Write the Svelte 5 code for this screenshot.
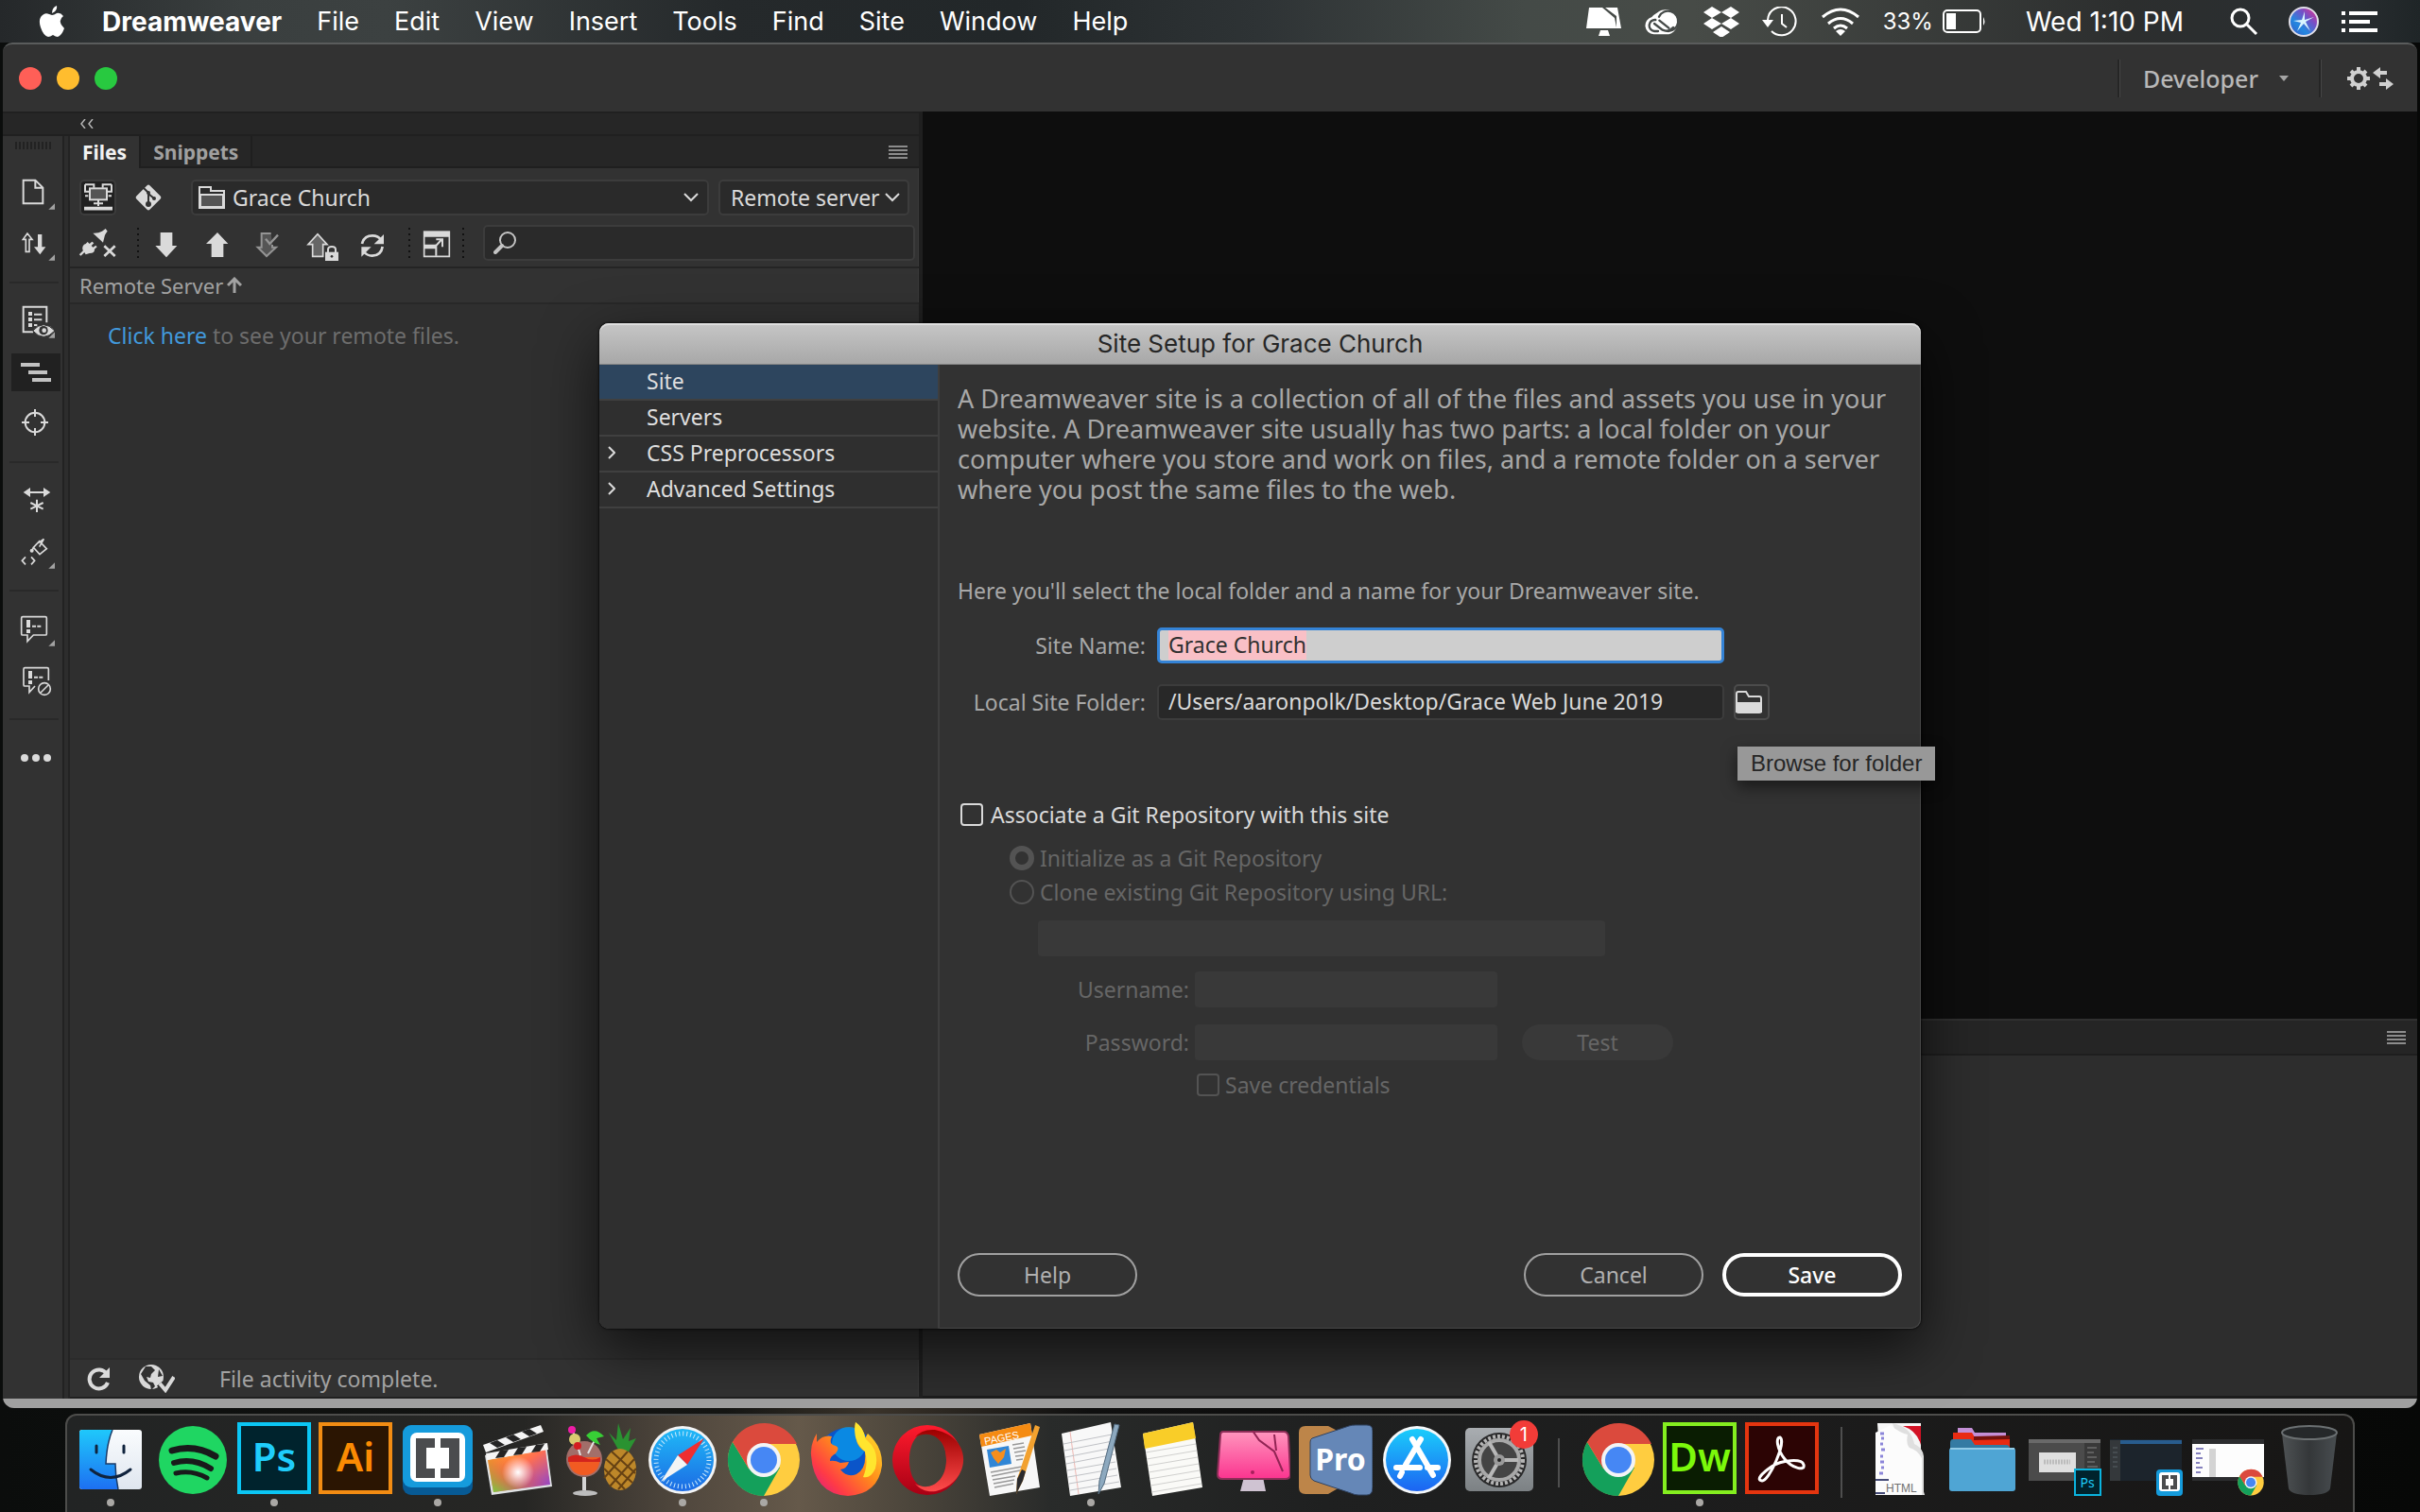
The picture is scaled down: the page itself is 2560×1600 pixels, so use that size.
<script lang="ts">
    import { onMount } from "svelte";

    const menus = ["File", "Edit", "View", "Insert", "Tools", "Find", "Site", "Window", "Help"];

    const categories = [
        { name: "Site", nested: false },
        { name: "Servers", nested: false },
        { name: "CSS Preprocessors", nested: true },
        { name: "Advanced Settings", nested: true },
    ];

    const dockLeft = [
        { name: "Finder", icon: finder, open: true },
        { name: "Spotify", icon: spotify, open: false },
        { name: "Photoshop", icon: photoshop, open: true },
        { name: "Illustrator", icon: illustrator, open: false },
        { name: "Brackets", icon: brackets, open: true },
        { name: "Final Cut Pro", icon: finalcut, open: false },
        { name: "Cocktail", icon: cocktail, open: false },
        { name: "Safari", icon: safari, open: true },
        { name: "Chrome", icon: chrome, open: true },
        { name: "Firefox", icon: firefox, open: false },
        { name: "Opera", icon: opera, open: false },
        { name: "Pages", icon: pages, open: false },
        { name: "TextEdit", icon: textedit, open: true },
        { name: "Notes", icon: notes, open: false },
        { name: "CleanMyMac", icon: cleaner, open: false },
        { name: "ProPresenter", icon: pro, open: false },
        { name: "App Store", icon: appstore, open: false },
        { name: "System Preferences", icon: settings, open: false },
    ];
    const dockMiddle = [
        { name: "Chrome", icon: chrome, open: false },
        { name: "Dreamweaver", icon: dreamweaver, open: true },
        { name: "Acrobat", icon: acrobat, open: false },
    ];
    const dockRight = [
        { name: "Documents", icon: htmlStack, open: false },
        { name: "Folder", icon: folderStack, open: false },
        { name: "Photoshop window", icon: thumbPs, open: false },
        { name: "Brackets window", icon: thumbBrackets, open: false },
        { name: "Chrome window", icon: thumbChrome, open: false },
        { name: "Trash", icon: trash, open: false },
    ];

    let selected = $state("Site");
    let siteName = $state("Grace Church");
    let folder = $state("/Users/aaronpolk/Desktop/Grace Web June 2019");
    let useGit = $state(false);
    let nameInput: HTMLInputElement;

    onMount(() => {
        nameInput.focus();
        nameInput.select();
    });
</script>

{#snippet chevron()}
    <svg class="chevron" viewBox="0 0 16 10"><path d="M1 1 8 8l7-7" fill="none" stroke="currentColor" stroke-width="2" /></svg>
{/snippet}

{#snippet hamburger()}
    <svg class="hamburger" viewBox="0 0 20 14"><path d="M0 1h20M0 5h20M0 9h20M0 13h20" stroke="#8c8c8c" stroke-width="2" /></svg>
{/snippet}

{#snippet finder()}
    <defs>
        <linearGradient id="fi-a" x1="0" y1="0" x2="0" y2="1"><stop offset="0" stop-color="#1fc8fb" /><stop offset="1" stop-color="#1d70f2" /></linearGradient>
        <linearGradient id="fi-b" x1="0" y1="0" x2="0" y2="1"><stop offset="0" stop-color="#fafcfe" /><stop offset="1" stop-color="#dfe6ef" /></linearGradient>
    </defs>
    <rect x="6" y="9" width="66" height="63" rx="3" fill="url(#fi-b)" />
    <path d="M9 9h32q-6 14-7 36h10q0 13 3 27H9q-3 0-3-3V12q0-3 3-3z" fill="url(#fi-a)" />
    <path d="M41 9q-6 14-7 36h10q0 13 3 27" fill="none" stroke="#1c3c68" stroke-width="1.5" />
    <path d="M24 26v7M53 26v7M18 51q21 17 42 0" fill="none" stroke="#10233d" stroke-width="3" stroke-linecap="round" />
{/snippet}

{#snippet spotify()}
    <circle cx="39" cy="41" r="36" fill="#1fd662" />
    <path d="M17 31q24-7 46 6" fill="none" stroke="#191a1b" stroke-width="7" stroke-linecap="round" />
    <path d="M19 44q20-6 39 6" fill="none" stroke="#191a1b" stroke-width="6" stroke-linecap="round" />
    <path d="M21 55q17-4 33 5" fill="none" stroke="#191a1b" stroke-width="5" stroke-linecap="round" />
{/snippet}

{#snippet photoshop()}
    <rect x="2" y="3" width="74" height="72" fill="#00232d" stroke="#0bc6f4" stroke-width="4" />
    <text x="39" y="53" text-anchor="middle" class="adobe" fill="#1fcdfb">Ps</text>
{/snippet}

{#snippet illustrator()}
    <rect x="2" y="3" width="74" height="72" fill="#2b1502" stroke="#f28c13" stroke-width="4" />
    <text x="39" y="53" text-anchor="middle" class="adobe" fill="#fb8b03">Ai</text>
{/snippet}

{#snippet dreamweaver()}
    <rect x="2" y="3" width="74" height="72" fill="#0a1d02" stroke="#84ee1f" stroke-width="4" />
    <text x="39" y="53" text-anchor="middle" class="adobe" fill="#7cf90b">Dw</text>
{/snippet}

{#snippet acrobat()}
    <rect x="2" y="3" width="74" height="72" fill="#2c0404" stroke="#e5350f" stroke-width="4" />
    <path d="M37 17c-5 0-3 13 5 23s22 13 20 6-24-5-34 2-17 14-10 15S44 22 37 17z" fill="none" stroke="#fff" stroke-width="3" />
{/snippet}

{#snippet brackets()}
    <rect x="2" y="4" width="74" height="74" rx="9" fill="#075a95" />
    <rect x="2" y="4" width="74" height="66" rx="9" fill="#159bdc" />
    <rect x="10" y="12" width="58" height="52" rx="7" fill="#fff" />
    <path d="M16 18h20v10h-9v22h9v10H16zM62 18H42v10h9v22h-9v10h20z" fill="#4b4c4e" />
{/snippet}

{#snippet finalcut()}
    <defs>
        <linearGradient id="fc-a" x1="0" y1="0" x2="1" y2="1"><stop offset="0" stop-color="#ffb41e" /><stop offset=".45" stop-color="#ff6f51" /><stop offset="1" stop-color="#7f3fdc" /></linearGradient>
        <linearGradient id="fc-b" x1="1" y1="0" x2="0" y2="1"><stop offset=".4" stop-color="#f33" stop-opacity="0" /><stop offset="1" stop-color="#66e03c" /></linearGradient>
        <radialGradient id="fc-c"><stop offset="0" stop-color="#fff" /><stop offset="1" stop-color="#fff" stop-opacity="0" /></radialGradient>
    </defs>
    <path d="M3 36 68 24l6 45-64 9z" fill="#dfe2e4" />
    <path d="M6 41 67 30l5 37-60 8z" fill="url(#fc-a)" />
    <path d="M6 41 67 30l5 37-60 8z" fill="url(#fc-b)" />
    <circle cx="38" cy="54" r="17" fill="url(#fc-c)" />
    <path d="M1 25 62 4l3 7L4 33zM4 34l65-11 1 7L5 41z" fill="#f5f5f5" />
    <path d="m8 23 8 5 8-3-8-5zM25 17l8 5 8-3-8-5zM42 11l8 5 8-3-8-5zM14 39l5-8 9-1-5 8zM33 36l5-8 9-1-5 8zM52 33l5-8 9-1-5 8z" fill="#242424" />
{/snippet}

{#snippet cocktail()}
    <path d="M58 30 48 12l8 8 2-18 5 17 8-12-2 14 8-3-8 14z" fill="#2a9231" />
    <ellipse cx="60" cy="51" rx="17" ry="22" fill="#bd8729" />
    <path d="m45 40 28 25M43 50l22 22M51 32l25 23M75 40 49 69M77 50 58 72M68 32 43 60" stroke="#654113" stroke-width="2" />
    <circle cx="22" cy="40" r="19" fill="#c7837d" fill-opacity=".75" />
    <path d="M5 38h34q-1 19-17 19T5 38z" fill="#f15b22" />
    <path d="M5 38q8-5 17 0t17 0v5H5z" fill="#d3241d" />
    <path d="M22 59v14" stroke="#d4d4d4" stroke-width="4" /><ellipse cx="23" cy="76" rx="13" ry="3" fill="#bdbdbd" />
    <path d="m10 10 8 26M36 14 26 34" stroke="#e3e3e3" stroke-width="2" />
    <circle cx="9" cy="9" r="4" fill="#ee1da7" /><path d="M24 15q9-10 19 1l-8 2 4 7q-8-2-15-10z" fill="#38ce36" />
    <circle cx="12" cy="19" r="6" fill="#d9ca71" /><circle cx="15" cy="26" r="4" fill="#d41d20" />
{/snippet}

{#snippet safari()}
    <defs><linearGradient id="sa-a" x1="0" y1="0" x2="0" y2="1"><stop offset="0" stop-color="#1fb9f7" /><stop offset="1" stop-color="#1c6be4" /></linearGradient></defs>
    <circle cx="39" cy="41" r="36" fill="#f3f4f5" /><circle cx="39" cy="41" r="33" fill="url(#sa-a)" />
    <circle cx="39" cy="41" r="28" fill="none" stroke="#cbe9fb" stroke-width="5" stroke-dasharray="1 3" />
    <path d="M62 18 34 36l10 10z" fill="#ee2e31" /><path d="M16 64 34 36l10 10z" fill="#f4f4f4" />
{/snippet}

{#snippet chrome()}
    <circle cx="39" cy="41" r="38" fill="#ffcd40" />
    <path d="M6 22A38 38 0 0 0 39 79L56 49 39 41 23 50z" fill="#14a05b" />
    <path d="M6 22A38 38 0 0 1 74 24H39L23 50z" fill="#db4a3d" />
    <circle cx="39" cy="41" r="18" fill="#f4f4f4" /><circle cx="39" cy="41" r="14" fill="#4687f4" />
{/snippet}

{#snippet firefox()}
    <defs><linearGradient id="ff-a" x1="1" y1="0" x2="0" y2="1"><stop offset="0" stop-color="#fff130" /><stop offset=".45" stop-color="#ff8d1a" /><stop offset=".75" stop-color="#ff3b45" /><stop offset="1" stop-color="#d31593" /></linearGradient></defs>
    <circle cx="40" cy="39" r="32" fill="#0b55c9" /><circle cx="42" cy="24" r="18" fill="#0aa0ee" fill-opacity=".7" />
    <path d="M2 36Q1 24 8 13v9q7-8 16-6-4 9 4 10 5 2 0 8-6 3-6 8 5-1 11 2l9-1q-2 7-9 8 7 9 17 5 11-6 9-24Q46 25 49 1q8 5 10 17l3-5q16 14 15 34-4 30-36 32Q5 77 2 36z" fill="url(#ff-a)" />
    <path d="M49 1q8 5 11 18 15 12 10 31-5 11-13 9 6-14 2-27-14-12-10-31z" fill="#ffe52e" />
{/snippet}

{#snippet opera()}
    <defs><linearGradient id="op-a" x1="0" y1="0" x2="0" y2="1"><stop offset="0" stop-color="#ff1b2d" /><stop offset="1" stop-color="#a70014" /></linearGradient><linearGradient id="op-b" x1="0" y1="0" x2="0" y2="1"><stop offset="0" stop-color="#9c0000" /><stop offset="1" stop-color="#ff4b4b" /></linearGradient></defs>
    <path fill-rule="evenodd" d="M39 4a37 37 0 1 0 0 74 37 37 0 0 0 0-74zm0 8c12 0 20 12 20 29S51 70 39 70 20 58 20 41s7-29 19-29z" fill="url(#op-a)" />
    <path d="M26 17q7-9 21-8c41 8 39 55 1 65-9 1-16-1-22-8 15 9 33-2 33-25S42 8 26 17z" fill="url(#op-b)" />
{/snippet}

{#snippet pages()}
    <path d="M8 14 62 2l10 68-53 9z" fill="#f7f7f7" /><path d="M8 14 62 2l2 13L10 27z" fill="#f58b12" />
    <text x="14" y="25" transform="rotate(-11 14 25)" class="pages-text" fill="#fff">PAGES</text>
    <path d="m16 30 23-4 3 19-23 4z" fill="#3086d6" /><path d="m20 33 6-3 4 3 6-4-2 9-6 7-5-6z" fill="#f68e1d" />
    <path d="m43 25 12-2M44 29l12-2M45 33l12-2M46 37l9-1M47 41l7-1M20 54l33-6M21 58l30-6M22 62l24-4M23 66l22-4M24 70l20-4" stroke="#999" stroke-width="1.5" />
    <path d="m67 4 5 2-18 57-7 14 1-16z" fill="#f2a12f" /><path d="m53 51 4 2-3 10-7 14 1-16z" fill="#2b2b2d" />
{/snippet}

{#snippet textedit()}
    <path d="M8 13 60 1l11 69-54 9z" fill="#f8f8f8" /><path d="m17 11 9 66" stroke="#edb7b2" stroke-width="1" />
    <path d="m10 24 51-10M11 31l51-10M12 38l51-10M13 45l51-10M14 52l51-9M15 59l51-9M16 66l51-9M17 73l52-9" stroke="#c0c2c6" stroke-width="1" />
    <path d="m64 3 5 1-16 62-6 11 1-14z" fill="#8da9bf" stroke="#51697d" stroke-width="1" />
{/snippet}

{#snippet notes()}
    <path d="M8 13 61 1l10 69-53 9z" fill="#fafaf7" /><path d="m8 13 53-12 3 17L10 29z" fill="#f9cd28" />
    <path d="m11 33 53-9M12 40l53-9M13 47l53-9M14 54l53-9M15 61l53-9M16 68l53-9M17 75l53-9" stroke="#d0d0ce" stroke-width="1" />
{/snippet}

{#snippet cleaner()}
    <defs><linearGradient id="cl-a" x1="0" y1="0" x2="0" y2="1"><stop offset="0" stop-color="#ff95bd" /><stop offset="1" stop-color="#fb348f" /></linearGradient></defs>
    <path d="M29 59h20l3 15H25z" fill="#cfc3d2" />
    <path d="M7 11h64q4 0 5 5l2 40q0 5-5 5H6q-5 0-5-5L4 15q0-4 3-4z" fill="url(#cl-a)" stroke="#8e2e58" stroke-width="2" />
    <path d="m38 10 7 10 16 12 9 21M61 14l2 17" fill="none" stroke="#922454" stroke-width="2" /><circle cx="38" cy="54" r="2" fill="#a71e5b" />
{/snippet}

{#snippet pro()}
    <path d="M7 5h24l31 16v38L31 77H7q-7 0-7-7V12q0-7 7-7z" fill="#bd8549" />
    <path d="m14 18 39-13q3-1 7-1h12q6 0 6 6v60q0 8-6 8h-9q-4 0-8-2L16 63q-4-2-4-6V22q0-3 2-4z" fill="#6587b7" stroke="#2f4261" stroke-width="1" />
    <text x="44" y="52" text-anchor="middle" class="pro-text" fill="#fff">Pro</text>
{/snippet}

{#snippet appstore()}
    <defs><linearGradient id="as-a" x1="0" y1="0" x2="0" y2="1"><stop offset="0" stop-color="#1bcdfb" /><stop offset="1" stop-color="#1c64f2" /></linearGradient></defs>
    <circle cx="39" cy="41" r="36" fill="#f5f8fa" /><circle cx="39" cy="41" r="33" fill="url(#as-a)" />
    <path d="m34 19 22 38M43 19 27 46M17 49h25M50 49h11M23 54l-2 4" stroke="#fff" stroke-width="6" stroke-linecap="round" />
{/snippet}

{#snippet settings()}
    <defs><linearGradient id="se-a" x1="0" y1="0" x2="0" y2="1"><stop offset="0" stop-color="#a9adb1" /><stop offset="1" stop-color="#7c8184" /></linearGradient></defs>
    <rect x="3" y="7" width="72" height="67" rx="5" fill="url(#se-a)" />
    <circle cx="39" cy="41" r="29" fill="#29292a" /><circle cx="39" cy="41" r="25" fill="none" stroke="#b5b5b5" stroke-width="4" stroke-dasharray="3 2" />
    <circle cx="39" cy="41" r="21" fill="#444" stroke="#a8a8a8" stroke-width="4" />
    <path d="M39 41h20M39 41 28 22M39 41 28 60" stroke="#b8b8b8" stroke-width="4" /><circle cx="39" cy="41" r="6" fill="#9a9a9a" /><circle cx="39" cy="41" r="2" fill="#222" />
{/snippet}

{#snippet htmlStack()}
    <path d="M14 2h46v62l4 14H12l3-30-2-10 2-20z" fill="#f6f6f6" /><path d="M41 5h19v20q-4-15-19-20z" fill="#d31225" />
    <path d="M30 2q20 4 23 22 9 4 10 13V78h-8z" fill="#dfdfdf" /><path d="M12 12 28 4q9 8 18 10-2 10 2 14 8 2 13 11v39H12z" fill="#fcfcfc" />
    <path d="M17 13h4M18 18h3M17 24h3M18 30h4M17 37h3M17 43h4M18 49h3M16 55h4" stroke="#8c86d9" stroke-width="3" />
    <path d="M12 62h14M12 76h10" stroke="#454b78" stroke-width="2" /><text x="23" y="75" class="html-text" fill="#6f6f6f">HTML</text>
{/snippet}

{#snippet folderStack()}
    <path d="M13 7h15l3 5h33v12H13z" fill="#c48fd6" /><path d="M8 12h20l3 5h37v12H8z" fill="#e92b12" /><path d="m30 16 38-1v4l-38 1z" fill="#75120d" />
    <path d="M8 19h19l4 6h33q4 0 4 4v10H5V23q0-4 3-4z" fill="#347ba3" />
    <rect x="4" y="28" width="70" height="46" rx="3" fill="#4fa5d4" /><path d="M5 29h68" stroke="#91cce8" stroke-width="2" />
{/snippet}

{#snippet thumbPs()}
    <rect x="1" y="19" width="76" height="44" fill="#4b4b4b" /><path d="M1 19h76v4H1z" fill="#696969" /><path d="M60 23h17v40H60z" fill="#393939" /><path d="M63 28h10M63 33h7M63 38h10M63 43h8M63 48h11" stroke="#5f5f5f" stroke-width="2" />
    <rect x="12" y="33" width="39" height="21" fill="#dfdfdf" /><path d="M17 43h28" stroke="#bcbcbc" stroke-width="5" stroke-dasharray="2 1" />
    <rect x="50" y="51" width="27" height="27" fill="#00232d" stroke="#0bb3de" stroke-width="2" />
    <text x="63" y="70" text-anchor="middle" class="tiny" fill="#1fcdfb">Ps</text>
{/snippet}

{#snippet thumbBrackets()}
    <rect x="1" y="19" width="76" height="44" fill="#1c242c" /><path d="M1 20h76v4H1z" fill="#285c8e" /><path d="M1 20h11v43H1z" fill="#34383b" /><path d="M4 28h5M4 33h5M4 38h5M4 43h5M4 48h5" stroke="#596066" stroke-width="1" />
    <rect x="50" y="51" width="28" height="28" rx="4" fill="#159bdc" /><rect x="53" y="54" width="22" height="20" rx="3" fill="#fff" />
    <path d="M56 57h7v4h-3v7h3v4h-7zM72 57h-7v4h3v7h-3v4h7z" fill="#4b4c4e" />
{/snippet}

{#snippet thumbChrome()}
    <rect x="1" y="19" width="76" height="44" fill="#fdfdfd" /><path d="M1 19h76v5H1zM1 59h76v4H1z" fill="#2c2d2f" /><path d="M19 29h7v30h-7z" fill="#d4d4d4" /><path d="M5 29h8M5 34h5M5 39h7M5 44h4M5 49h7M5 54h5" stroke="#8581bd" stroke-width="2" />
    <g transform="translate(49 50) scale(.36)">{@render chrome()}</g>
{/snippet}

{#snippet trash()}
    <defs><linearGradient id="tr-a"><stop offset="0" stop-color="#4e5254" /><stop offset=".5" stop-color="#343739" /><stop offset="1" stop-color="#484d50" /></linearGradient></defs>
    <path d="M10 13h58l-7 58q-2 7-22 7t-22-7z" fill="url(#tr-a)" />
    <ellipse cx="39" cy="12" rx="29" ry="7" fill="#25282a" stroke="#6b7072" stroke-width="2" />
{/snippet}

{#snippet dockApp(app: any)}
    <button class="app" aria-label={app.name}>
        <svg width="78" height="80" viewBox="0 0 78 80">{@render app.icon()}</svg>
        {#if app.name === "System Preferences"}<span class="badge">1</span>{/if}
        {#if app.open}<span class="dot"></span>{/if}
    </button>
{/snippet}

<div class="desktop">
    <header class="menubar">
        <svg class="apple" width="28" height="34" viewBox="0 0 28 34">
            <path d="M19 0q1 5-5 8 0-6 5-8zM14 10q2 0 5-2 4-1 7 3-7 5 1 13-3 8-7 9-2 0-5-2-3 2-5 2-5-1-8-10T4 10q3-3 7-1z" fill="#fff" />
        </svg>
        <nav>
            <button class="menu current">Dreamweaver</button>
            {#each menus as menu}
                <button class="menu">{menu}</button>
            {/each}
        </nav>
        <div class="status">
            <svg width="38" height="32" viewBox="0 0 38 32"><path d="M3 1h14l13 11 2 10V10L20 1h13l4 22H0zM15 25h8l2 6H13z" fill="#fff" /></svg>
            <svg width="38" height="28" viewBox="0 0 114 84">
                <path d="M38 14a40 40 0 1 1 38 68H28a28 28 0 0 1-6-55q5-7 16-13z" fill="#fff" />
                <path d="M74 72a32 32 0 1 0-29-46M34 36a18 18 0 1 0-4 36h12M30 48l26 20q20 9 34-8M46 38l30 24" fill="none" stroke="#454a48" stroke-width="7" stroke-linecap="round" />
            </svg>
            <svg width="38" height="32" viewBox="0 0 38 32"><path d="m9 0 10 6-10 6-9-6zM29 0l9 6-9 6-10-6zM9 12l10 6-10 6-9-6zM29 12l9 6-9 6-10-6zM19 21l9 6-9 6-9-6z" fill="#fff" /></svg>
            <svg width="38" height="32" viewBox="0 0 38 32">
                <path d="M7 9A15 15 0 1 1 10 26M6 14q0-4 3-8" fill="none" stroke="#fff" stroke-width="2" /><path d="M0 14h12l-6 8z" fill="#fff" /><path d="M21 8v10l5 4" fill="none" stroke="#fff" stroke-width="2" />
            </svg>
            <svg width="42" height="30" viewBox="0 0 42 30">
                <path d="M2 10q19-16 38 0M8 17q13-11 26 0M14 22q7-6 14 0" fill="none" stroke="#fff" stroke-width="3" /><path d="M16 25q5-4 10 0l-5 5z" fill="#fff" />
            </svg>
            <span class="power">33%
                <svg width="46" height="26" viewBox="0 0 46 26"><rect x="1" y="1" width="39" height="23" rx="4" fill="none" stroke="#fff" stroke-width="2" /><path d="M4 4h10v17H4zM43 8q3 5 0 9z" fill="#fff" /></svg>
            </span>
            <time>Wed 1:10 PM</time>
            <svg width="30" height="30" viewBox="0 0 30 30"><circle cx="11" cy="11" r="9" fill="none" stroke="#fff" stroke-width="3" /><path d="m18 18 10 10" stroke="#fff" stroke-width="3" /></svg>
            <svg class="siri" width="32" height="32" viewBox="0 0 32 32">
                <defs><linearGradient id="siri-a" x1="1" y1="0" x2="0" y2="1"><stop offset="0" stop-color="#f52b83" /><stop offset=".35" stop-color="#7550c7" /><stop offset=".65" stop-color="#2388df" /><stop offset="1" stop-color="#3b52c5" /></linearGradient></defs>
                <circle cx="16" cy="16" r="15" fill="url(#siri-a)" stroke="#e1dfe9" stroke-width="2" /><path d="m17 5 0 9 10-3-9 5 5 10-7-8-7 8 4-9-8-2 9-1z" fill="#d9f5ff" />
            </svg>
            <svg width="38" height="22" viewBox="0 0 38 22"><path d="M0 2h4M8 2h30M0 11h4M8 11h22M0 20h4M8 20h30" stroke="#fff" stroke-width="4" /></svg>
        </div>
    </header>

    <main class="window">
        <div class="titlebar">
            <div class="lights">
                <button class="red" aria-label="Close"></button>
                <button class="yellow" aria-label="Minimize"></button>
                <button class="green" aria-label="Zoom"></button>
            </div>
            <button class="layout">Developer
                <svg width="10" height="6" viewBox="0 0 10 6"><path d="M0 0h10L5 6z" fill="#a5a5a5" /></svg>
            </button>
            <button class="sync" aria-label="Sync settings">
                <svg width="50" height="24" viewBox="0 0 50 24">
                    <circle cx="12" cy="12" r="7" fill="none" stroke="#d0d0d0" stroke-width="4" />
                    <path d="M12 0v5M12 19v5M0 12h5M19 12h5M4 4l3 3M17 17l3 3M20 4l-3 3M7 17l-3 3" stroke="#d0d0d0" stroke-width="4" />
                    <path d="m27 6 8-6v4h7v4h-7v4zM49 18l-8-6v4h-7v4h7v4z" fill="#d0d0d0" />
                </svg>
            </button>
        </div>

        <div class="workspace">
            <section class="left">
                <div class="collapse">
                    <svg width="14" height="10" viewBox="0 0 14 10"><path d="M5 0 1 5l4 5M13 0 9 5l4 5" fill="none" stroke="#b4b4b4" stroke-width="1.5" /></svg>
                </div>
                <div class="columns">
                    <aside class="tools">
                        <div class="grip"></div>
                        <button class="tool" aria-label="Open documents">
                            <svg viewBox="12 201 192 162">
                                <path d="M74 242h38l24 24v50H74zM112 242v24h24" fill="none" stroke="#dadada" stroke-width="6" /><path d="M174 316v19h-20z" fill="#a2a2a2" />
                            </svg>
                        </button>
                        <button class="tool" aria-label="File management">
                            <svg viewBox="12 363 192 162">
                                <path d="m87 411-14 19h9v39h11v-39h9z" fill="none" stroke="#dadada" stroke-width="5" /><path d="M120 414h13v40h12l-18 24-19-24h12z" fill="#dadada" /><path d="M174 478v19h-20z" fill="#a2a2a2" />
                            </svg>
                        </button>
                        <hr />
                        <button class="tool" aria-label="Live view options">
                            <svg viewBox="12 -21 192 162">
                                <path d="M105 94H74V14h74v50" fill="none" stroke="#dadada" stroke-width="6" />
                                <path d="M90 36h12M90 54h12M90 72h12" stroke="#dadada" stroke-width="12" /><path d="M108 38h25M108 55h25M108 72h10" stroke="#dadada" stroke-width="6" />
                                <path d="M174 94v19h-20z" fill="#a2a2a2" /><path d="M104 90q34-38 70 0-36 38-70 0z" fill="#dadada" stroke="#323232" stroke-width="3" />
                                <circle cx="138" cy="89" r="14" fill="#323232" /><circle cx="140" cy="89" r="7" fill="#dadada" />
                            </svg>
                        </button>
                        <button class="tool pressed" aria-label="Element outline">
                            <svg viewBox="12 141 192 162"><path d="M66 198h60M90 222h60M102 246h60" stroke="#c2c2c2" stroke-width="12" /></svg>
                        </button>
                        <button class="tool" aria-label="Inspect">
                            <svg viewBox="12 303 192 162"><circle cx="111" cy="381" r="31" fill="none" stroke="#dadada" stroke-width="6" /><path d="M111 339v24M111 399v24M69 381h24M129 381h24" stroke="#dadada" stroke-width="6" /></svg>
                        </button>
                        <hr />
                        <button class="tool" aria-label="Expand all">
                            <svg viewBox="12 549 192 162"><path d="m74 603 22-15v30zM160 603l-22-15v30z" fill="#dadada" /><path d="M92 603h50M117 626v40M97 636l40 20M137 636l-40 20" stroke="#dadada" stroke-width="6" /></svg>
                        </button>
                        <button class="tool" aria-label="Format source code">
                            <svg viewBox="12 711 192 162">
                                <path d="m81 808-11 12 11 12M99 808l11 12-11 12" fill="none" stroke="#dadada" stroke-width="5" />
                                <path d="m106 778 19-20 23 24-22 18zM125 776l14-25-18 13M106 778l-6 14" fill="none" stroke="#dadada" stroke-width="5" /><circle cx="101" cy="788" r="6" fill="#dadada" />
                                <path d="M174 826v19h-20z" fill="#a2a2a2" />
                            </svg>
                        </button>
                        <hr />
                        <button class="tool" aria-label="Apply comment">
                            <svg viewBox="12 957 192 162">
                                <path d="M72 998h72q4 0 4 4v50q0 4-4 4h-38l-19 20v-20H72q-4 0-4-4v-50q0-4 4-4z" fill="none" stroke="#dadada" stroke-width="5" />
                                <path d="M90 1008v24M90 1038v12" stroke="#dadada" stroke-width="12" /><path d="M102 1028h12M118 1028h12" stroke="#dadada" stroke-width="6" /><path d="M174 1072v19h-20z" fill="#a2a2a2" />
                            </svg>
                        </button>
                        <button class="tool" aria-label="Remove comment">
                            <svg viewBox="12 1119 192 162">
                                <path d="M154 1200v-36q0-4-4-4H79q-4 0-4 4v50q0 4 4 4h14v20l18-20" fill="none" stroke="#dadada" stroke-width="5" />
                                <path d="M96 1170v24M96 1200v12" stroke="#dadada" stroke-width="12" /><path d="M108 1190h12M124 1190h12" stroke="#dadada" stroke-width="6" />
                                <circle cx="141" cy="1227" r="19" fill="none" stroke="#dadada" stroke-width="5" /><path d="m129 1239 24-24" stroke="#dadada" stroke-width="5" />
                            </svg>
                        </button>
                        <hr />
                        <button class="tool" aria-label="Customize toolbar">
                            <svg viewBox="12 1365 192 162"><circle cx="78" cy="1446" r="12" fill="#dadada" /><circle cx="114" cy="1446" r="12" fill="#dadada" /><circle cx="150" cy="1446" r="12" fill="#dadada" /></svg>
                        </button>
                    </aside>

                    <section class="panel">
                        <div class="tabs">
                            <button class="tab active">Files</button>
                            <button class="tab">Snippets</button>
                            {@render hamburger()}
                        </div>
                        <div class="site-row">
                            <button class="manage" aria-label="Manage sites">
                                <svg width="30" height="30" viewBox="270 256 90 90">
                                    <path d="M273 260h28v10M273 260v22h12M357 260h-28v10M357 260v22h-12" fill="none" stroke="#dadada" stroke-width="6" /><rect x="288" y="272" width="54" height="36" fill="#555" stroke="#dadada" stroke-width="6" />
                                    <path d="M315 308v20M300 320h30M273 296h10M347 296h10" stroke="#dadada" stroke-width="6" /><path d="M270 336h90" stroke="#dadada" stroke-width="11" />
                                </svg>
                            </button>
                            <button class="git" aria-label="Git view">
                                <svg width="30" height="30" viewBox="0 0 30 30"><rect x="5" y="5" width="20" height="20" rx="2" transform="rotate(45 15 15)" fill="#dadada" /><path d="m10 5 5 5v12M15 11l6 5" fill="none" stroke="#323232" stroke-width="2" /><circle cx="15" cy="10" r="2" fill="#323232" /><circle cx="15" cy="22" r="3" fill="#323232" /><circle cx="21" cy="16" r="2" fill="#323232" /></svg>
                            </button>
                            <div class="dropdown site-select">
                                <svg width="28" height="24" viewBox="0 0 28 24"><path d="M1 1h12v4h14v18H1z" fill="none" stroke="#dadada" stroke-width="2" /><path d="M2 9h24v13H2z" fill="#555" stroke="#dadada" stroke-width="2" /></svg>
                                <select aria-label="Site"><option>Grace Church</option></select>
                                {@render chevron()}
                            </div>
                            <div class="dropdown view-select">
                                <select aria-label="View"><option>Remote server</option></select>
                                {@render chevron()}
                            </div>
                        </div>
                        <div class="action-row">
                            <button class="action" aria-label="Connect">
                                <svg viewBox="231 384 162 114">
                                    <path d="m254 480 14-14" stroke="#dadada" stroke-width="7" /><path d="M262 462q-2-14 10-18l6-6 6 6 8-7 6 5-8 8 5 5 9-6 4 5-8 7q1 13-16 13l-12 4z" fill="#dadada" />
                                    <path d="m295 410 32 30 6-24q4-8 8-12l-6-8-11 8q-12 7-29 6z" fill="#dadada" /><path d="m331 451 34 32M365 451l-34 32" stroke="#dadada" stroke-width="8" />
                                </svg>
                            </button>
                            <i class="handle"></i>
                            <button class="action" aria-label="Get files"><svg viewBox="447 384 162 114"><path d="M509 408h38v42h15l-34 37-35-37h16z" fill="#dadada" /></svg></button>
                            <button class="action" aria-label="Put files"><svg viewBox="609 384 162 114"><path d="M671 486h38v-42h15l-34-36-36 36h17z" fill="#dadada" /></svg></button>
                            <button class="action" aria-label="Check out">
                                <svg viewBox="771 384 162 114"><path d="M860 411h-30v44h-12l28 28 30-28h-12v-8" fill="#555" stroke="#949494" stroke-width="6" /><path d="m843 428 13 16 26-28" fill="none" stroke="#949494" stroke-width="7" /></svg>
                            </button>
                            <button class="action" aria-label="Check in">
                                <svg viewBox="933 384 162 114"><path d="M992 484v-38h-14l30-33 30 33h-13v38z" fill="#666" stroke="#dadada" stroke-width="5" /><path d="M1032 470h42v28h-42z" fill="#dadada" /><path d="M1041 474v-12q0-9 12-9t12 9v12" fill="none" stroke="#dadada" stroke-width="6" /><circle cx="1053" cy="484" r="4" fill="#323232" /></svg>
                            </button>
                            <button class="action" aria-label="Synchronize">
                                <svg viewBox="1095 384 162 114"><path d="M1149 444q6-26 33-26 18 0 28 14M1214 453q-4 28-33 29-16 0-28-14" fill="none" stroke="#dadada" stroke-width="8" /><path d="M1218 414v31h-31zM1147 485v-31h31z" fill="#dadada" /></svg>
                            </button>
                            <i class="handle before"></i>
                            <button class="action" aria-label="Expand panel">
                                <svg viewBox="1305 384 162 114"><path d="M1346 406h80v78h-80z" fill="none" stroke="#dadada" stroke-width="5" /><path d="M1344 404h84v18h-84zM1346 446h38v14h-38z" fill="#dadada" /><path d="M1384 482v-36M1382 452l18-20M1384 430h20v24" fill="none" stroke="#dadada" stroke-width="6" /></svg>
                            </button>
                            <i class="handle end"></i>
                            <label class="search">
                                <svg width="24" height="24" viewBox="0 0 24 24"><circle cx="15" cy="9" r="8" fill="none" stroke="#c4c4c4" stroke-width="2" /><path d="m9 15-7 7" stroke="#c4c4c4" stroke-width="4" stroke-linecap="round" /></svg>
                                <input type="search" aria-label="Search files" />
                            </label>
                        </div>
                        <div class="list-head">Remote Server
                            <svg width="16" height="18" viewBox="0 0 16 18"><path d="M8 2v15M1 9l7-7 7 7" fill="none" stroke="#a2a2a2" stroke-width="3" /></svg>
                        </div>
                        <p class="hint"><a href="#connect">Click here</a> to see your remote files.</p>
                        <footer class="panel-foot">
                            <svg width="26" height="26" viewBox="0 0 26 26"><path d="M22 8A10 10 0 1 0 23 17" fill="none" stroke="#dadada" stroke-width="4" /><path d="M25 1v11H14z" fill="#dadada" /></svg>
                            <svg width="38" height="30" viewBox="0 0 38 30"><circle cx="13" cy="13" r="13" fill="#dadada" /><path d="M7 2h6l4 4-4 4-1 4-4-1 2 5 5 1 2 4-4 4-1-5-6-5-4-7zM21 5l4 7-5 1z" fill="#323232" /><path d="m22 20 6 7 9-14" fill="none" stroke="#323232" stroke-width="8" /><path d="m22 20 6 7 9-14" fill="none" stroke="#dadada" stroke-width="4" /></svg>
                            <span>File activity complete.</span>
                        </footer>
                    </section>
                </div>
            </section>

            <section class="right">
                <div class="canvas"></div>
                <div class="properties-head">{@render hamburger()}</div>
                <div class="properties"></div>
            </section>
        </div>
        <div class="window-edge"></div>
    </main>

    <section class="dialog" role="dialog" aria-label="Site Setup">
        <h1>Site Setup for Grace Church</h1>
        <div class="dialog-body">
            <nav class="categories">
                {#each categories as category}
                    <button class="category" class:selected={selected === category.name} onclick={() => (selected = category.name)}>
                        <span class="twisty">
                            {#if category.nested}
                                <svg width="8" height="14" viewBox="0 0 8 14"><path d="m1 1 6 6-6 6" fill="none" stroke="#dadada" stroke-width="2" /></svg>
                            {/if}
                        </span>
                        {category.name}
                    </button>
                {/each}
            </nav>
            <form class="pane" onsubmit={(e) => e.preventDefault()}>
                <p class="intro">A Dreamweaver site is a collection of all of the files and assets you use in your website. A Dreamweaver site usually has two parts: a local folder on your computer where you store and work on files, and a remote folder on a server where you post the same files to the web.</p>
                <p class="lead">Here you'll select the local folder and a name for your Dreamweaver site.</p>
                <div class="field">
                    <label for="site-name">Site Name:</label>
                    <input id="site-name" class="name" type="text" bind:this={nameInput} bind:value={siteName} />
                </div>
                <div class="field">
                    <label for="site-folder">Local Site Folder:</label>
                    <input id="site-folder" type="text" bind:value={folder} />
                    <button type="button" class="browse" aria-label="Browse for folder">
                        <svg width="28" height="24" viewBox="0 0 28 24"><path d="M1 22V3q0-2 2-2h8l3 5h11q2 0 2 2v14z" fill="none" stroke="#dadada" stroke-width="2" /><path d="M0 12h28v9q0 3-3 3H3q-3 0-3-3z" fill="#dadada" /></svg>
                        <span class="tooltip">Browse for folder</span>
                    </button>
                </div>

                <label class="check git-toggle"><input type="checkbox" bind:checked={useGit} />Associate a Git Repository with this site</label>
                <fieldset disabled={!useGit}>
                    <label class="check"><input type="radio" name="git" checked />Initialize as a Git Repository</label>
                    <label class="check"><input type="radio" name="git" />Clone existing Git Repository using URL:</label>
                    <input class="url" type="text" aria-label="Repository URL" />
                    <div class="credential">
                        <label for="username">Username:</label>
                        <input id="username" type="text" />
                    </div>
                    <div class="credential">
                        <label for="password">Password:</label>
                        <input id="password" type="password" />
                        <button type="button" class="test">Test</button>
                    </div>
                    <label class="check save-credentials"><input type="checkbox" />Save credentials</label>
                </fieldset>

                <div class="actions">
                    <button type="button" class="pill help">Help</button>
                    <button type="button" class="pill">Cancel</button>
                    <button type="submit" class="pill primary">Save</button>
                </div>
            </form>
        </div>
    </section>

    <nav class="dock">
        {#each dockLeft as app}{@render dockApp(app)}{/each}
        <i class="divider short"></i>
        {#each dockMiddle as app}{@render dockApp(app)}{/each}
        <i class="divider"></i>
        {#each dockRight as app}{@render dockApp(app)}{/each}
    </nav>
</div>

<style>
    :global(body) {
        margin: 0;
        background: #0b0d0c;
    }

    .desktop {
        position: relative;
        display: flex;
        flex-direction: column;
        height: 100vh;
        overflow: hidden;
        background: linear-gradient(90deg, #0b0d0c, #151614 30%, #3b342b 36%, #101010 45%, #070807);
        font-family: "Noto Sans", "Open Sans", sans-serif;
        font-size: 23px;
        color: #dadada;
    }

    button,
    input,
    select {
        font: inherit;
        color: inherit;
        margin: 0;
        padding: 0;
        border: 0;
        background: none;
        box-sizing: border-box;
        outline: none;
    }

    svg {
        display: block;
        flex-shrink: 0;
    }

    /* menu bar */
    .menubar {
        display: flex;
        align-items: center;
        height: 45px;
        padding: 0 45px 0 41px;
        background: linear-gradient(90deg, #25282a, #3a3f3f 10%, #3c4141 16%, #25292b 30%, #222729 42%, #2e3335 52%, #444a47 63%, #474b47 70%, #2c2e2e 88%, #292e31 97%, #1f2527);
        font-family: Inter, sans-serif;
        font-size: 27px;
        color: #fff;
        box-sizing: border-box;
    }
    .menubar nav {
        display: flex;
        gap: 37px;
        margin-left: 39px;
        flex: 1;
    }
    .menu {
        line-height: 44px;
    }
    .menu.current {
        font-size: 28px;
        font-weight: 700;
    }
    .status {
        display: flex;
        align-items: center;
        gap: 24px;
    }
    .power {
        display: flex;
        align-items: center;
        gap: 10px;
        font-size: 24px;
    }
    time {
        margin: 0 25px 0 18px;
        font-size: 28px;
    }
    .siri {
        margin-left: 8px;
    }

    /* application window */
    .window {
        display: flex;
        flex-direction: column;
        flex: 1;
        min-height: 0;
        margin: 0 3px 6px;
        border-top: 2px solid #5a5c5c;
        border-radius: 10px 10px 12px 12px;
        background: #323232;
        overflow: hidden;
    }
    .titlebar {
        display: flex;
        align-items: center;
        height: 71px;
        padding: 0 24px 0 17px;
    }
    .lights {
        display: flex;
        flex: 1;
        gap: 16px;
    }
    .lights button {
        width: 24px;
        height: 24px;
        border-radius: 50%;
    }
    .red {
        background: #ff5f57;
    }
    .yellow {
        background: #ffbd2e;
    }
    .green {
        background: #28c940;
    }
    .layout,
    .sync {
        display: flex;
        align-items: center;
        height: 40px;
        border-left: 2px solid #252525;
        box-shadow: inset 1px 0 #454545;
    }
    .layout {
        gap: 22px;
        padding: 0 32px 0 25px;
        font-size: 25px;
        font-weight: 500;
        color: #b8b8b8;
    }
    .sync {
        padding-left: 28px;
    }

    .workspace {
        display: flex;
        flex: 1;
        min-height: 0;
    }
    .left {
        display: flex;
        flex-direction: column;
        width: 973px;
        box-sizing: border-box;
        border-right: 4px solid #1f1f1f;
        box-shadow: inset -1px 0 #3a3a3a;
    }
    .collapse {
        display: flex;
        align-items: center;
        height: 26px;
        padding-left: 82px;
        background: #262626;
        border-top: 2px solid #202020;
        border-bottom: 2px solid #202020;
        box-sizing: border-box;
    }
    .columns {
        display: flex;
        flex: 1;
        min-height: 0;
    }
    .tools {
        display: flex;
        flex-direction: column;
        width: 71px;
        padding: 0 4px 0 1px;
        border-right: 2px solid #232323;
        box-shadow: inset -4px 0 #2d2d2d, inset -6px 0 #222;
        box-sizing: border-box;
    }
    .grip {
        width: 38px;
        height: 8px;
        margin: 6px 12px 19px;
        background: repeating-linear-gradient(90deg, #222 0 2px, #323232 2px 4px);
    }
    .tool {
        width: 64px;
        height: 54px;
    }
    .tool svg {
        width: 64px;
        height: 54px;
    }
    .tool.pressed {
        background: linear-gradient(#212121, #212121) 8px center / 52px 40px no-repeat;
    }
    .tools hr {
        width: 52px;
        height: 2px;
        margin: 13px 6px;
        border: 0;
        background: #292929;
    }

    .panel {
        display: flex;
        flex-direction: column;
        flex: 1;
        min-width: 0;
    }
    .tabs {
        display: flex;
        height: 34px;
        background: #262626;
        box-shadow: inset 0 -2px #1f1f1f;
        align-items: stretch;
        font-size: 21px;
        font-weight: 700;
    }
    .tab {
        padding: 0 13px;
        color: #a0a0a0;
        border-right: 2px solid #1f1f1f;
    }
    .tab.active {
        background: #323232;
        color: #f2f2f2;
    }
    .hamburger {
        width: 20px;
        height: 14px;
        margin: auto 12px auto auto;
    }
    .site-row,
    .action-row {
        display: flex;
        align-items: center;
    }
    .site-row {
        padding: 12px 10px 10px;
    }
    .manage {
        display: flex;
        align-items: center;
        justify-content: center;
        width: 39px;
        height: 38px;
        border: 2px solid #3c3c3c;
        border-radius: 5px;
        background: #212121;
    }
    .git {
        margin: 0 30px 0 19px;
    }
    .dropdown,
    .search {
        display: flex;
        align-items: center;
        height: 38px;
        border: 2px solid #3c3c3c;
        border-radius: 5px;
        background: #2a2a2a;
        box-sizing: border-box;
    }
    .dropdown select {
        flex: 1;
        min-width: 0;
        height: 34px;
        appearance: none;
    }
    .site-select {
        flex: 1;
        gap: 8px;
        padding: 0 9px 0 6px;
        margin-right: 10px;
    }
    .view-select {
        width: 202px;
        padding: 0 8px 0 11px;
    }
    .chevron {
        width: 16px;
        height: 10px;
    }
    .action-row {
        height: 38px;
        padding: 0 4px 6px 3px;
    }
    .action svg {
        width: 54px;
        height: 38px;
    }
    .handle {
        width: 2px;
        height: 32px;
        margin: 0 2px 0 14px;
        background: repeating-linear-gradient(#111 0 2px, transparent 2px 6px);
    }
    .handle.before {
        margin: 0 1px 0 13px;
    }
    .handle.end {
        margin: 0 20px 0 0;
    }
    .search {
        flex: 1;
        padding: 0 9px;
    }
    .search input {
        flex: 1;
        min-width: 0;
        margin-left: 10px;
    }
    .list-head {
        display: flex;
        align-items: center;
        gap: 4px;
        height: 40px;
        padding-left: 10px;
        border-top: 2px solid #242424;
        border-bottom: 2px solid #282828;
        box-sizing: border-box;
        font-size: 22px;
        color: #a2a2a2;
    }
    .hint {
        flex: 1;
        margin: 0;
        padding: 17px 40px;
        line-height: 32px;
        background: #2f2f2f;
        color: #6d6d6d;
    }
    .hint a {
        color: #4299dc;
        text-decoration: none;
    }
    .panel-foot {
        display: flex;
        align-items: center;
        height: 43px;
        padding-left: 17px;
        gap: 30px;
        border-top: 2px solid #2b2b2b;
        border-bottom: 2px solid #202020;
        box-sizing: border-box;
        color: #a2a2a2;
    }
    .panel-foot span {
        margin-left: 17px;
    }

    .right {
        display: flex;
        flex-direction: column;
        flex: 1;
        min-width: 0;
    }
    .canvas {
        flex: 1;
        background: #0e0e0e;
    }
    .properties-head {
        display: flex;
        height: 39px;
        background: #252525;
        border-top: 2px solid #303030;
        border-bottom: 2px solid #1e1e1e;
        box-sizing: border-box;
    }
    .properties {
        height: 363px;
        background: #2d2d2d;
        border-bottom: 3px solid #1c1c1c;
        box-sizing: border-box;
    }
    .window-edge {
        height: 10px;
        background: #a0a0a0;
    }

    /* site setup dialog */
    .dialog {
        position: absolute;
        top: 342px;
        left: 634px;
        width: 1398px;
        height: 1064px;
        display: flex;
        flex-direction: column;
        border-radius: 10px;
        background: #323232;
        box-shadow: 0 0 2px 1px #0008, inset 0 0 0 1px #484848, 0 20px 60px #000a;
    }
    .dialog h1 {
        margin: 0;
        height: 44px;
        line-height: 44px;
        text-align: center;
        font-family: Inter, sans-serif;
        font-size: 26px;
        font-weight: 400;
        color: #262626;
        border-radius: 10px 10px 0 0;
        background: linear-gradient(#c6c6c6, #a7a7a7);
        box-shadow: inset 0 2px #dedede, inset 0 -1px #838383;
    }
    .dialog-body {
        display: flex;
        flex: 1;
        min-height: 0;
    }
    .categories {
        display: flex;
        flex-direction: column;
        width: 360px;
        box-sizing: border-box;
        border-right: 2px solid #3e3e3e;
        border-radius: 0 0 0 10px;
        background: #2f2f2f;
    }
    .category {
        display: flex;
        align-items: center;
        height: 38px;
        padding-bottom: 2px;
        text-align: left;
        color: #dedede;
        border-bottom: 2px solid #404040;
    }
    .category.selected {
        background: #2d455e;
    }
    .twisty {
        width: 41px;
        padding-left: 9px;
    }
    .pane {
        display: flex;
        flex-direction: column;
        flex: 1;
        min-width: 0;
        padding: 20px 20px 34px 19px;
        color: #a8a8a8;
    }
    .intro {
        margin: 0;
        font-size: 27px;
        line-height: 32px;
    }
    .lead {
        margin: 75px 0 23px;
        line-height: 32px;
    }
    .field {
        display: flex;
        align-items: center;
        margin-bottom: 22px;
    }
    .field label {
        width: 199px;
        margin-right: 12px;
        text-align: right;
        white-space: nowrap;
    }
    .field input {
        width: 600px;
        height: 38px;
        padding: 0 10px 2px;
        border: 2px solid #3c3c3c;
        border-radius: 5px;
        background: #282828;
        color: #dadada;
    }
    .field .name {
        padding: 0 9px 2px;
        border: 3px solid #3483d6;
        background: #cecece;
        color: #303030;
    }
    .field .name::selection {
        background: #f9c0c6;
        color: #303030;
    }
    .browse {
        position: relative;
        display: flex;
        align-items: center;
        width: 38px;
        height: 38px;
        margin-left: 10px;
        border: 2px solid #4c4c4c;
        border-radius: 5px;
    }
    .tooltip {
        position: absolute;
        top: 64px;
        left: 2px;
        padding: 0 14px;
        line-height: 36px;
        white-space: nowrap;
        font-family: "Liberation Sans", Arial, sans-serif;
        font-size: 24px;
        color: #262626;
        background: #989898;
        box-shadow: 0 6px 16px #0008;
    }
    .check {
        display: flex;
        align-items: center;
        gap: 8px;
        height: 36px;
    }
    .check input {
        width: 24px;
        height: 24px;
        appearance: none;
        border: 2px solid currentColor;
        border-radius: 4px;
    }
    .check input[type="radio"] {
        width: 26px;
        height: 26px;
        border-radius: 50%;
    }
    .check input[type="radio"]:checked {
        border-width: 6px;
    }
    .git-toggle {
        margin: 60px 0 10px 3px;
        color: #dadada;
    }
    fieldset {
        margin: 0;
        padding: 0 0 0 55px;
        border: 0;
        min-width: 0;
        color: #666;
    }
    fieldset .check {
        gap: 6px;
    }
    fieldset .check input {
        border-color: #535353;
    }
    fieldset input[type="text"],
    fieldset input[type="password"] {
        display: block;
        width: 320px;
        height: 38px;
        border-radius: 4px;
        background: #393939;
    }
    fieldset input.url[type="text"] {
        width: 600px;
        margin: 12px 0 16px 30px;
    }
    .credential {
        display: flex;
        align-items: center;
        margin-bottom: 18px;
    }
    .credential label {
        width: 190px;
        margin-right: 6px;
        text-align: right;
    }
    .test {
        width: 160px;
        height: 38px;
        margin-left: 26px;
        border-radius: 19px;
        background: #393939;
    }
    .save-credentials {
        margin: -10px 0 0 198px;
    }
    .actions {
        display: flex;
        gap: 20px;
        margin-top: auto;
    }
    .pill {
        width: 190px;
        height: 46px;
        border: 2px solid #a0a0a0;
        border-radius: 23px;
        color: #b0b0b0;
    }
    .pill.help {
        margin-right: auto;
    }
    .pill.primary {
        border: 4px solid #fff;
        color: #fff;
        font-weight: 500;
    }

    /* dock */
    .dock {
        display: flex;
        height: 104px;
        margin: 0 69px;
        padding: 0 3px;
        box-sizing: border-box;
        border: 2px solid #4d4d4b;
        border-bottom: 0;
        border-radius: 12px 12px 0 0;
        background: linear-gradient(90deg, #222424, #262624 20%, #51483e 27%, #65594a 32%, #4b453b 37%, #292b2a 43%, #1f2020 55%, #1c1c1c 75%, #171615);
    }
    .app {
        position: relative;
        display: flex;
        flex: 1;
        flex-direction: column;
        align-items: center;
        padding-top: 6px;
        min-width: 0;
    }
    .dot {
        width: 8px;
        height: 8px;
        margin-top: 2px;
        border-radius: 50%;
        background: #aaa8a5;
    }
    .badge {
        position: absolute;
        top: 5px;
        right: 2px;
        width: 30px;
        height: 30px;
        border-radius: 50%;
        font-family: Inter, sans-serif;
        font-size: 20px;
        line-height: 30px;
        color: #fff;
        background: #f23c38;
    }
    .divider {
        width: 2px;
        height: 75px;
        margin: 12px 19px;
        background: #4e4e4e;
    }
    .divider.short {
        height: 52px;
        margin-top: 24px;
    }
    .adobe {
        font-size: 42px;
        font-weight: 600;
    }
    .tiny {
        font-size: 14px;
    }
    .pages-text {
        font-size: 11px;
        font-family: "Liberation Sans", Arial, sans-serif;
    }
    .html-text {
        font-size: 12px;
        font-family: "Liberation Sans", Arial, sans-serif;
    }
    .pro-text {
        font-size: 32px;
        font-weight: 700;
    }
</style>
